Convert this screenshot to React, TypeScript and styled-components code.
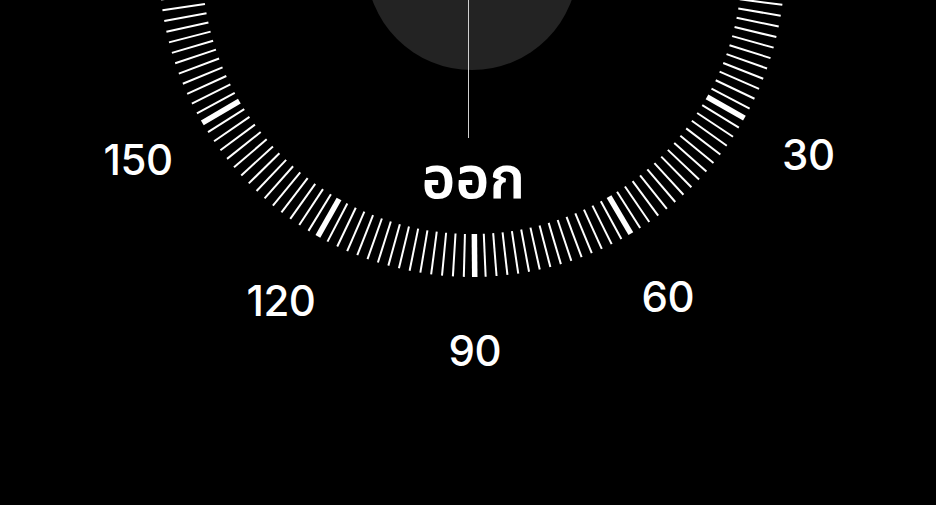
import React from 'react';
import styled, { createGlobalStyle } from 'styled-components';

const GlobalStyle = createGlobalStyle`
  html, body {
    margin: 0;
    padding: 0;
    background: #000;
  }
  body {
    font-family: Inter, 'Noto Sans', 'Noto Sans Thai', sans-serif;
    overflow: hidden;
  }
`;

// dial geometry (px)
const SIZE = 840;
const C = SIZE / 2;
const R_OUT = 313;
const R_IN = 270;
const R_FACE = 106;
const R_NUM = 387;
const R_CARD = 213;
const ROT = -0.5; // dial is turned a touch off the 90 mark

// only the part of the dial that shows on screen
const NUMBERS = [30, 60, 90, 120, 150];
const CARDINALS = [{ deg: 90, text: 'ออก' }];

const Stage = styled.main`
  position: relative;
  width: 936px;
  height: 505px;
  overflow: hidden;
  background: #000;
`;

const Dial = styled.div`
  position: relative;
  width: ${SIZE}px;
  height: ${SIZE}px;
  margin: ${-36 - C}px 0 0 ${471.5 - C}px;
`;

const Ticks = styled.svg`
  display: block;
  width: 100%;
  height: 100%;
`;

const Label = styled.span<{ $cardinal?: boolean }>`
  position: absolute;
  transform: translate(-50%, -50%);
  color: #fff;
  white-space: nowrap;
  line-height: 1;
  font-size: ${(p) => (p.$cardinal ? '58px' : '42px')};
  font-weight: ${(p) => (p.$cardinal ? 600 : 500)};
  letter-spacing: ${(p) => (p.$cardinal ? '0' : '-0.5px')};
`;

const Heading = styled.div`
  position: absolute;
  left: 468px;
  top: 0;
  width: 1px;
  height: 138px;
  background: #d0d0d0;
`;

const polar = (deg: number, r: number) => {
  const a = ((deg + ROT) * Math.PI) / 180;
  return { x: C + r * Math.cos(a), y: C + r * Math.sin(a) };
};

export default function App() {
  const ticks = Array.from({ length: 180 }, (_, i) => i * 2);

  return (
    <>
      <GlobalStyle />
      <Stage>
        <Dial>
          <Ticks viewBox={`0 0 ${SIZE} ${SIZE}`}>
            <circle cx={C} cy={C} r={R_FACE} fill="#232323" />
            {ticks.map((deg) => {
              const major = deg % 30 === 0;
              const a = polar(deg, R_IN);
              const b = polar(deg, R_OUT);
              return (
                <line
                  key={deg}
                  x1={a.x}
                  y1={a.y}
                  x2={b.x}
                  y2={b.y}
                  stroke="#fff"
                  strokeWidth={major ? 5.5 : 2}
                />
              );
            })}
          </Ticks>
          {NUMBERS.map((n) => {
            const p = polar(n, R_NUM);
            return (
              <Label key={n} style={{ left: p.x, top: p.y }}>
                {n}
              </Label>
            );
          })}
          {CARDINALS.map((c) => {
            const p = polar(c.deg, R_CARD);
            return (
              <Label key={c.deg} $cardinal style={{ left: p.x, top: p.y }}>
                {c.text}
              </Label>
            );
          })}
        </Dial>
        <Heading />
      </Stage>
    </>
  );
}
